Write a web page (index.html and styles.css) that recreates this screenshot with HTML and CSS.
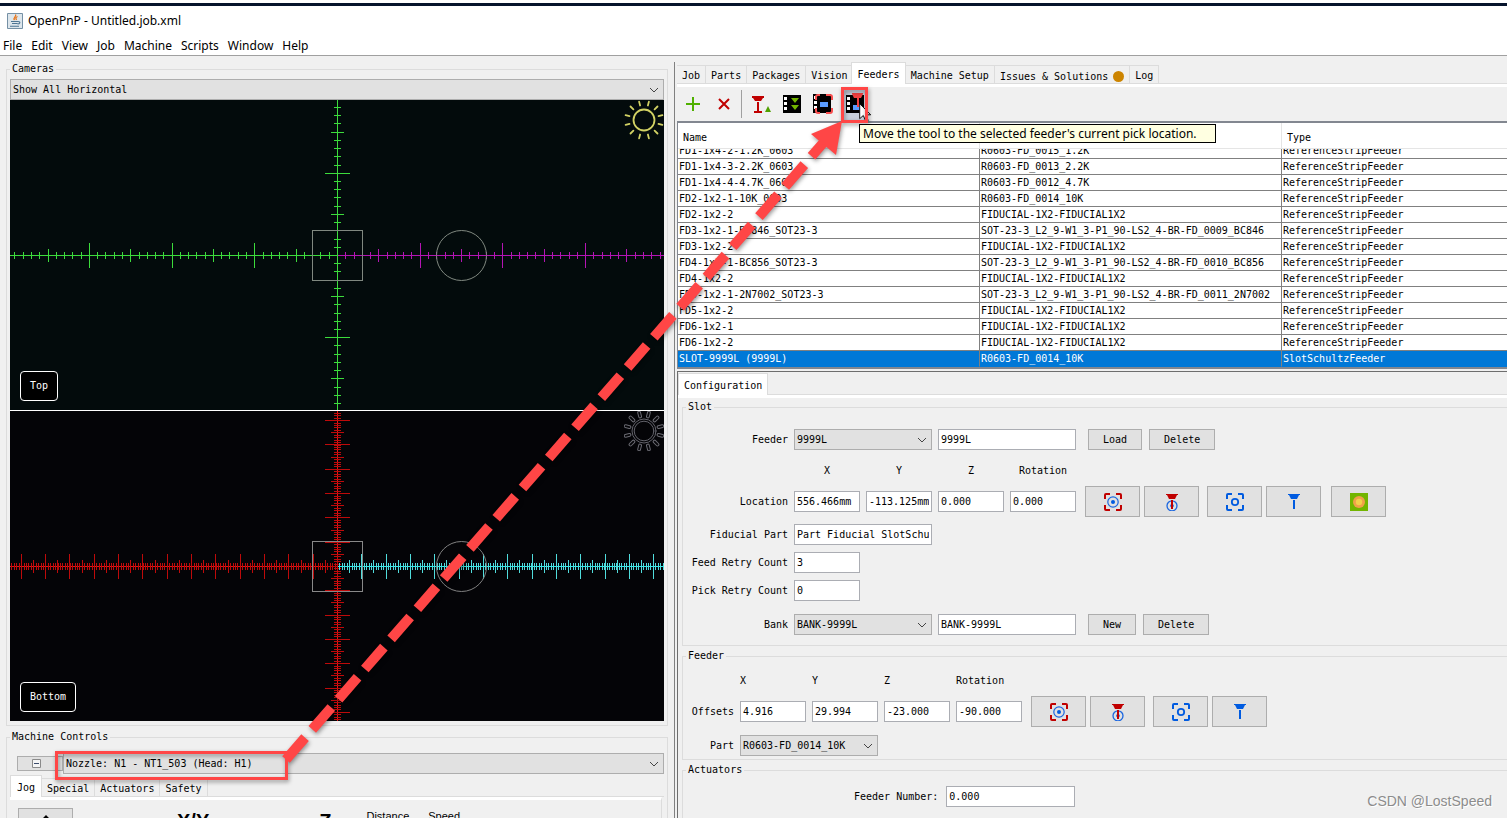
FILE: index.html
```html
<!DOCTYPE html>
<html lang="en">
<head>
<meta charset="utf-8">
<title>OpenPnP - Untitled.job.xml</title>
<link rel="stylesheet" href="styles.css">
</head>
<body>
<svg class="defs" width="0" height="0" aria-hidden="true">
  <defs>
    <symbol id="i-cam-red" viewBox="0 0 18 18">
      <path d="M1 6V2q0-1 1-1h4M12 1h4q1 0 1 1v4M17 12v4q0 1-1 1h-4M6 17H2q-1 0-1-1v-4" fill="none" stroke="#c00000" stroke-width="2"/>
      <circle cx="9" cy="9" r="5.2" fill="none" stroke="#1a66e0" stroke-width="1.2"/><circle cx="9" cy="9" r="2" fill="#005be0"/>
    </symbol>
    <symbol id="i-tool-red" viewBox="0 0 18 18">
      <circle cx="9" cy="12.8" r="5" fill="none" stroke="#1a66e0" stroke-width="1.3"/><circle cx="9" cy="12.8" r="1.8" fill="#005be0"/>
      <path d="M3 1h12v1h-1l-2 4H6L4 2H3zM8 7h2v9H8z" fill="#c00000"/>
    </symbol>
    <symbol id="i-cam-blue" viewBox="0 0 18 18">
      <path d="M1 6V2q0-1 1-1h4M12 1h4q1 0 1 1v4M17 12v4q0 1-1 1h-4M6 17H2q-1 0-1-1v-4" fill="none" stroke="#005be0" stroke-width="2"/>
      <circle cx="9" cy="9" r="3.2" fill="none" stroke="#005be0" stroke-width="1.8"/>
    </symbol>
    <symbol id="i-tool-blue" viewBox="0 0 18 18"><path d="M3 1h12v1h-1l-2 4H6L4 2H3zM8 7h2v9H8z" fill="#005be0"/></symbol>
    <symbol id="i-part" viewBox="0 0 18 18"><path d="M0 0h18v18H0z" fill="#72b500"/><circle cx="9" cy="9" r="6" fill="#f0a04a"/><circle cx="9" cy="9" r="3.2" fill="#f3d04c"/></symbol>
  </defs>
</svg>
<header class="titlebar">
  <svg width="16" height="16" viewBox="0 0 16 16"><path d="M.5.5h15v15H.5z" fill="#dde6ec" stroke="#7590a5"/><path d="M8.500 1.500c1.500 2-3 3-1 5.500M10.500 3.500c-2 1-2 1.500-1 3.500" fill="none" stroke="#e8751a" stroke-width="1.300"/><path d="M4 8.500h7M5 10.500h5.500M3 13.200h9M11 8.500c3 0 2 2.500-.5 2.500" fill="none" stroke="#4d7593" stroke-width="1.100"/></svg>
  <span>OpenPnP - Untitled.job.xml</span>
</header>
<nav class="menubar">
  <button>File</button><button>Edit</button><button>View</button><button>Job</button><button>Machine</button><button>Scripts</button><button>Window</button><button>Help</button>
</nav>
<main class="split">
  <section class="left">
    <fieldset class="group cameras">
      <legend>Cameras</legend>
      <select class="combo" aria-label="Camera view"><option>Show All Horizontal</option></select>
      <div class="view top">
        <svg class="reticle" viewBox="0 0 654 310" preserveAspectRatio="xMidYMid slice" fill="none" shape-rendering="crispEdges">
          <g stroke="#3cdc3c">
            <path d="M0 155.500H327M327.500 0V310"/>
            <path d="M327.500 155.500H0" stroke-width="7" stroke-dasharray="1 7.270" stroke-dashoffset=".5"/>
            <path d="M327.500 155.500H0" stroke-width="13" stroke-dasharray="1 40.340" stroke-dashoffset=".5"/>
            <path d="M327.500 155.500H0" stroke-width="25" stroke-dasharray="1 81.680" stroke-dashoffset=".5"/>
            <path d="M327.500 155.500V0M327.500 155.500V310" stroke-width="7" stroke-dasharray="1 7.220" stroke-dashoffset=".5"/>
            <path d="M327.500 155.500V0M327.500 155.500V310" stroke-width="13" stroke-dasharray="1 40.100" stroke-dashoffset=".5"/>
            <path d="M327.500 155.500V0M327.500 155.500V310" stroke-width="25" stroke-dasharray="1 81.200" stroke-dashoffset=".5"/>
          </g>
          <g stroke="#b414b4">
            <path d="M328 155.500H654"/>
            <path d="M327.500 155.500H654" stroke-width="7" stroke-dasharray="1 7.270" stroke-dashoffset="-7.770"/>
            <path d="M327.500 155.500H654" stroke-width="13" stroke-dasharray="1 40.340" stroke-dashoffset="-40.840"/>
            <path d="M327.500 155.500H654" stroke-width="25" stroke-dasharray="1 81.680" stroke-dashoffset="-82.180"/>
          </g>
          <path d="M302.500 130.500h50v50h-50z" stroke="#808880"/>
          <circle cx="451.500" cy="155.500" r="25" stroke="#808880" shape-rendering="auto"/>
        </svg>
        <svg class="sun" viewBox="0 0 40 40" fill="none" stroke="#d2d264" stroke-linecap="round"><circle cx="20" cy="20" r="10.500" stroke-width="1.800"/>
          <g stroke-width="1.800"><path id="rays" d="M34.500 16.100l3.900-1M34.500 23.900l3.900 1M30.600 9.400l2.900-2.900M30.600 30.600l2.900 2.900M23.900 5.500l1-3.900M23.900 34.500l1 3.900M16.100 5.500l-1-3.900M16.100 34.500l-1 3.900M9.400 9.400L6.500 6.500M9.400 30.600l-2.900 2.900M5.500 16.100l-3.900-1M5.500 23.900l-3.900 1"/></g></svg>
        <span class="tag">Top</span>
      </div>
      <div class="view bottom">
        <svg class="reticle" viewBox="0 0 654 310" preserveAspectRatio="xMidYMid slice" fill="none" shape-rendering="crispEdges">
          <g stroke="#be0a0a">
            <path d="M0 155.500H327M327.500 0V310" stroke="#e61414"/>
            <path d="M327.500 155.500H0M327.500 155.500V0M327.500 155.500V310" stroke-width="7" stroke-dasharray="1 1.430" stroke-dashoffset=".5"/>
            <path d="M327.500 155.500H0M327.500 155.500V0M327.500 155.500V310" stroke-width="13" stroke-dasharray="1 11.160" stroke-dashoffset=".5"/>
            <path d="M327.500 155.500H0M327.500 155.500V0M327.500 155.500V310" stroke-width="25" stroke-dasharray="1 23.320" stroke-dashoffset=".5"/>
          </g>
          <g stroke="#50dcdc">
            <path d="M328 155.500H654" stroke="#28f0f0"/>
            <path d="M327.500 155.500H654" stroke-width="7" stroke-dasharray="1 1.430" stroke-dashoffset="-1.930"/>
            <path d="M327.500 155.500H654" stroke-width="13" stroke-dasharray="1 11.160" stroke-dashoffset="-11.660"/>
            <path d="M327.500 155.500H654" stroke-width="25" stroke-dasharray="1 23.320" stroke-dashoffset="-23.820"/>
          </g>
          <path d="M302.500 130.500h50v50h-50z" stroke="#888"/>
          <circle cx="451.500" cy="155.500" r="25" stroke="#808080" shape-rendering="auto"/>
        </svg>
        <svg class="sun" viewBox="0 0 40 40" fill="none" stroke-linecap="round"><circle cx="20" cy="20" r="9.800" stroke="#62626a"/><circle cx="20" cy="20" r="12" stroke="#62626a"/><use href="#rays" stroke="#6a6a72" stroke-width="3.800"/><use href="#rays" stroke="#050508" stroke-width="1.800"/></svg>
        <span class="tag">Bottom</span>
      </div>
    </fieldset>
    <fieldset class="group controls">
      <legend>Machine Controls</legend>
      <div class="nozzle">
        <button class="btn collapse" aria-label="Collapse"><svg width="9" height="9" viewBox="0 0 9 9"><path d="M.5.5h8v8h-8z" fill="#f4f4f4" stroke="#8a8a8a"/><path d="M2 4.500h5" stroke="#3c4c6c"/></svg></button>
        <select class="combo" aria-label="Selected tool"><option>Nozzle: N1 - NT1_503 (Head: H1)</option></select>
      </div>
      <div class="tabs jogtabs" role="tablist">
        <button class="tab on" role="tab">Jog</button><button class="tab" role="tab">Special</button><button class="tab" role="tab">Actuators</button><button class="tab" role="tab">Safety</button>
      </div>
      <div class="jog">
        <button class="btn home" aria-label="Home"><svg width="16" height="16" viewBox="0 0 16 16"><path d="M8 0l8 8h-3v8H3V8H0z"/></svg></button>
        <b>X/Y</b><b>Z</b><span>Distance</span><span>Speed</span>
      </div>
    </fieldset>
  </section>
  <section class="right">
    <div class="tabs" role="tablist">
      <button class="tab" role="tab">Job</button><button class="tab" role="tab">Parts</button><button class="tab" role="tab">Packages</button><button class="tab" role="tab">Vision</button><button class="tab on" role="tab">Feeders</button><button class="tab" role="tab">Machine Setup</button><button class="tab issues" role="tab">Issues &amp; Solutions<i></i></button><button class="tab" role="tab">Log</button>
    </div>
    <div class="toolbar">
      <button aria-label="New feeder"><svg viewBox="0 0 24 24"><path d="M12 5v14M5 12h14" stroke="#50b000" stroke-width="2"/></svg></button>
      <button aria-label="Delete feeder"><svg viewBox="0 0 24 24"><path d="M7 7l10 10M17 7L7 17" stroke="#c00000" stroke-width="2"/></svg></button>
      <hr>
      <button aria-label="Pick"><svg viewBox="0 0 24 24"><path d="M3 4h12v2h-1l-2 3H6L4 6H3zM8 10h2v9H8zM5 19h8v2H5z" fill="#c00000"/><path d="M19 14l3 6h-6z" fill="#50a000"/></svg></button>
      <button aria-label="Feed"><svg viewBox="0 0 24 24"><path d="M3 3h18v18H3z"/><path d="M4 5h3v3H4zM4 10h3v3H4zM4 15h3v3H4z" fill="#fff"/><path d="M11 6h8l-4 5zM11 13h8l-4 5z" fill="#72b500"/></svg></button>
      <button aria-label="Move camera"><svg viewBox="0 0 24 24"><path d="M2 2h18v19H2z"/><path d="M3 4h3v3H3zM3 9h3v3H3zM3 14h3v3H3z" fill="#fff"/><path d="M9 10h8v5H9z" fill="#5a9cff"/><path d="M5 8V5q0-2 2-2h2M15 3h4q2 0 2 2v3M21 16v3q0 2-2 2h-4M9 21H7q-2 0-2-2v-3" fill="none" stroke="#f85050" stroke-width="2"/></svg></button>
      <button class="pressed" aria-label="Move tool"><svg viewBox="0 0 24 24"><path d="M3 3h18v18H3z"/><path d="M4 5h3v3H4zM4 10h3v3H4zM4 15h3v3H4z" fill="#fff"/><path d="M10 13h8v5h-8z" fill="#5a9cff"/><path d="M9 1h11v1l-2 4h-7L9 2zM14 6h2v9h-2z" fill="#f04040"/></svg>
        <svg class="cursor" viewBox="0 0 13 20"><path d="M.7.7v15l3.600-3.200 2.600 6 2.300-1-2.500-5.700h5z" fill="#fff" stroke="#111"/></svg></button>
      <div class="tip" role="tooltip">Move the tool to the selected feeder's current pick location.</div>
    </div>
    <div class="tablebox">
      <table>
        <colgroup><col class="c1"><col class="c2"><col></colgroup>
        <thead><tr><th>Name</th><th></th><th>Type</th></tr></thead>
        <tbody>
          <tr class="cut"><td><div>FD1-1x4-2-1.2K_0603</div></td><td><div>R0603-FD_0015_1.2K</div></td><td><div>ReferenceStripFeeder</div></td></tr>
          <tr><td>FD1-1x4-3-2.2K_0603</td><td>R0603-FD_0013_2.2K</td><td>ReferenceStripFeeder</td></tr>
          <tr><td>FD1-1x4-4-4.7K_0603</td><td>R0603-FD_0012_4.7K</td><td>ReferenceStripFeeder</td></tr>
          <tr><td>FD2-1x2-1-10K_0603</td><td>R0603-FD_0014_10K</td><td>ReferenceStripFeeder</td></tr>
          <tr><td>FD2-1x2-2</td><td>FIDUCIAL-1X2-FIDUCIAL1X2</td><td>ReferenceStripFeeder</td></tr>
          <tr><td>FD3-1x2-1-BC846_SOT23-3</td><td>SOT-23-3_L2_9-W1_3-P1_90-LS2_4-BR-FD_0009_BC846</td><td>ReferenceStripFeeder</td></tr>
          <tr><td>FD3-1x2-2</td><td>FIDUCIAL-1X2-FIDUCIAL1X2</td><td>ReferenceStripFeeder</td></tr>
          <tr><td>FD4-1x2-1-BC856_SOT23-3</td><td>SOT-23-3_L2_9-W1_3-P1_90-LS2_4-BR-FD_0010_BC856</td><td>ReferenceStripFeeder</td></tr>
          <tr><td>FD4-1x2-2</td><td>FIDUCIAL-1X2-FIDUCIAL1X2</td><td>ReferenceStripFeeder</td></tr>
          <tr><td>FD5-1x2-1-2N7002_SOT23-3</td><td>SOT-23-3_L2_9-W1_3-P1_90-LS2_4-BR-FD_0011_2N7002</td><td>ReferenceStripFeeder</td></tr>
          <tr><td>FD5-1x2-2</td><td>FIDUCIAL-1X2-FIDUCIAL1X2</td><td>ReferenceStripFeeder</td></tr>
          <tr><td>FD6-1x2-1</td><td>FIDUCIAL-1X2-FIDUCIAL1X2</td><td>ReferenceStripFeeder</td></tr>
          <tr><td>FD6-1x2-2</td><td>FIDUCIAL-1X2-FIDUCIAL1X2</td><td>ReferenceStripFeeder</td></tr>
          <tr class="sel"><td>SLOT-9999L (9999L)</td><td>R0603-FD_0014_10K</td><td>SlotSchultzFeeder</td></tr>
        </tbody>
      </table>
    </div>
    <div class="config">
      <div class="tabs" role="tablist"><button class="tab on" role="tab">Configuration</button></div>
      <fieldset class="group slot">
        <legend>Slot</legend>
        <div class="form">
          <label for="feeder">Feeder</label>
          <select id="feeder" class="combo w2"><option>9999L</option></select>
          <input class="w2" aria-label="Feeder name" value="9999L">
          <div class="acts text"><button class="btn">Load</button><button class="btn">Delete</button></div>
          <div class="heads"><span>X</span><span>Y</span><span>Z</span><span>Rotation</span></div>
          <label for="lx">Location</label>
          <input id="lx" value="556.466mm"><input aria-label="Y" value="-113.125mm"><input aria-label="Z" value="0.000"><input aria-label="Rotation" value="0.000">
          <div class="acts icons">
            <button class="btn" aria-label="Capture camera position"><svg><use href="#i-cam-red"/></svg></button><button class="btn" aria-label="Capture tool position"><svg><use href="#i-tool-red"/></svg></button>
            <button class="btn next" aria-label="Move camera here"><svg><use href="#i-cam-blue"/></svg></button><button class="btn" aria-label="Move tool here"><svg><use href="#i-tool-blue"/></svg></button>
            <button class="btn far" aria-label="Locate fiducial"><svg><use href="#i-part"/></svg></button>
          </div>
          <label class="row" for="fid">Fiducial Part</label><input id="fid" class="w2 row" value="Part_Fiducial_SlotSchu">
          <label class="row" for="frc">Feed Retry Count</label><input id="frc" class="row" value="3">
          <label class="row" for="prc">Pick Retry Count</label><input id="prc" class="row" value="0">
          <label class="bank" for="bank">Bank</label>
          <select id="bank" class="combo w2 bank"><option>BANK-9999L</option></select>
          <input class="w2 bank" aria-label="Bank name" value="BANK-9999L">
          <div class="acts text bank"><button class="btn">New</button><button class="btn">Delete</button></div>
        </div>
      </fieldset>
      <fieldset class="group feeder">
        <legend>Feeder</legend>
        <div class="form">
          <div class="heads"><span>X</span><span>Y</span><span>Z</span><span>Rotation</span></div>
          <label for="ox">Offsets</label>
          <input id="ox" value="4.916"><input aria-label="Y" value="29.994"><input aria-label="Z" value="-23.000"><input aria-label="Rotation" value="-90.000">
          <div class="acts icons">
            <button class="btn" aria-label="Capture camera position"><svg><use href="#i-cam-red"/></svg></button><button class="btn" aria-label="Capture tool position"><svg><use href="#i-tool-red"/></svg></button>
            <button class="btn next" aria-label="Move camera here"><svg><use href="#i-cam-blue"/></svg></button><button class="btn" aria-label="Move tool here"><svg><use href="#i-tool-blue"/></svg></button>
          </div>
          <label class="row" for="part">Part</label><select id="part" class="combo w2 row"><option>R0603-FD_0014_10K</option></select>
        </div>
      </fieldset>
      <fieldset class="group actuators">
        <legend>Actuators</legend>
        <div class="actrow"><label for="num">Feeder Number:</label><input id="num" value="0.000"></div>
      </fieldset>
    </div>
  </section>
</main>
<svg class="marks" width="900" height="800" viewBox="0 0 900 800" fill="none" stroke="#ff4646" aria-hidden="true">
  <path d="M842.500 88.500h24v33h-24zM56.500 752.500h230v26h-230z" stroke-width="3"/>
  <path d="M286 759.500L824 142" stroke-width="10" stroke-dasharray="29 11"/>
  <path d="M842 121l-31 13 25 21z" fill="#ff4646" stroke="none"/>
</svg>
<div class="watermark">CSDN @LostSpeed</div>
</body>
</html>
```
FILE: styles.css
```css
* { box-sizing: border-box; }
html { background: #fff; }
body {
  display: flex;
  flex-direction: column;
  margin: 0;
  height: 100vh;
  overflow: hidden;
  position: relative;
  color: #000;
  font: 10px/12px "DejaVu Sans Mono", monospace;
}
button, input, select { font: inherit; color: inherit; margin: 0; border-radius: 0; }
.defs { position: absolute; }

.titlebar {
  display: flex;
  align-items: center;
  gap: 5px;
  flex: none;
  height: 33px;
  padding: 0 7px;
  margin-top: 3px;
  border-top: 3px solid #06142c;
  background: #fff;
  font: 12px/16px "Noto Sans", sans-serif;
}
.menubar {
  display: flex;
  flex: none;
  gap: 9px;
  height: 20px;
  padding: 1px 3px 0;
  background: #fff;
  border-bottom: 1px solid #a0a0a0;
}
.menubar button { border: 0; padding: 0; background: none; font: 12px/16px "Noto Sans", sans-serif; }

.split { display: grid; grid-template-columns: 674fr 833fr; flex: 1; min-height: 0; overflow: hidden; background: #f0f0f0; }
.left { min-width: 0; padding: 7px 6px 0; }
.right { min-width: 0; border-left: 1px solid #808080; padding-left: 2px; margin-top: 6px; }

.group { min-width: 0; margin: 0; border: 1px solid #dcdcdc; padding: 4px 3px; }
.group legend { padding: 0 2px; }

.combo {
  display: block;
  appearance: none;
  height: 21px;
  padding: 0 2px;
  border: 1px solid #adadad;
  background: #e1e1e1 url("data:image/svg+xml,%3Csvg xmlns='http://www.w3.org/2000/svg' width='10' height='6'%3E%3Cpath d='M1 1l4 4 4-4' fill='none' stroke='%23444'/%3E%3C/svg%3E") no-repeat right 4px center;
}
.cameras .combo { width: 100%; }
input { height: 21px; min-width: 0; border: 1px solid #abadb3; padding: 0 2px; background: #fff; }
.btn { border: 1px solid #adadad; background: #e1e1e1; padding: 0; }

.view { position: relative; height: 310px; background: #030b0c; overflow: hidden; }
.view.bottom { height: 311px; border-top: 1px solid #fff; background: #040407; }
.reticle { display: block; width: 100%; height: 310px; }
.sun { position: absolute; top: 0; right: 0; width: 40px; height: 40px; }
.tag {
  position: absolute;
  left: 10px;
  bottom: 9px;
  padding: 8px 9px;
  border: 1px solid #fff;
  border-radius: 4px;
  background: #000;
  color: #fff;
}

.controls { margin-top: 5px; padding-top: 10px; }
.nozzle { display: flex; align-items: center; padding-left: 7px; }
.nozzle .combo { flex: 1; }
.collapse { width: 46px; height: 15px; padding-right: 8px; display: flex; align-items: center; justify-content: center; }

.tabs { display: flex; align-items: flex-end; height: 22px; border-bottom: 1px solid #dcdcdc; }
.tab { height: 18px; border: 1px solid #dcdcdc; border-width: 1px 1px 0 0; background: #f0f0f0; padding: 2px 5px 0; }
.tab.on { height: 22px; background: #fff; margin-bottom: -1px; border-left-width: 1px; }
.right > .tabs .on { margin-left: -2px; }
.issues { display: flex; align-items: center; gap: 5px; padding-top: 4px; }
.issues i { width: 11px; height: 11px; border-radius: 50%; background: #cc8400; }

.jogtabs { margin-top: 1px; }
.jogtabs .on { padding: 2px 6px 0; }
.jog {
  display: flex;
  align-items: flex-start;
  margin-right: 2px;
  padding: 8px;
  border-top: 3px solid #fff;
  border-right: 1px solid #dcdcdc;
  font: 11px/12px "Liberation Sans", sans-serif;
}
.home { width: 55px; height: 31px; padding: 4px; }
.jog b { font-size: 20px; line-height: 24px; margin: 1px 0 0 104px; }
.jog b + b { margin-left: 110px; }
.jog span { margin: 2px 0 0 35px; }
.jog span + span { margin-left: 19px; }

.toolbar {
  position: relative;
  display: flex;
  align-items: center;
  height: 37px;
  border-top: 3px solid #fff;
}
.toolbar button { position: relative; width: 31px; height: 32px; padding: 0; border: 0; background: none; display: flex; align-items: center; justify-content: center; }
.toolbar button svg { width: 24px; height: 24px; }
.toolbar hr { width: 1px; height: 28px; margin: 0 3px 0 2px; border: 0; background: #a0a0a0; }
.toolbar .pressed { background: #c8d0dc; width: 27px; margin-left: 3px; }
.toolbar .pressed .cursor { position: absolute; left: 18px; top: 15px; width: 13px; height: 20px; }
.tip {
  position: absolute;
  left: 182px;
  top: 37px;
  z-index: 3;
  min-width: 357px;
  padding: 0 3px;
  border: 1px solid #000;
  background: #ffffe1;
  font: 12px/17px "Noto Sans", sans-serif;
  white-space: nowrap;
}

.tablebox { border: 2px solid #828790; border-width: 2px 0 2px 1px; background: #fff; overflow: hidden; }
table { width: 100%; table-layout: fixed; border-collapse: separate; border-spacing: 0; }
.c1, .c2 { width: 302px; }
th { height: 26px; padding: 4px 5px 0; text-align: left; font-weight: normal; border-right: 1px solid #e5e5e5; border-bottom: 1px solid #e5e5e5; }
td { height: 16px; padding: 0 1px; border-right: 1px solid #808080; border-bottom: 1px solid #808080; white-space: nowrap; overflow: hidden; line-height: 15px; }
th:last-child, td:last-child { border-right: 0; }
.cut td { height: 10px; }
.cut div { height: 9px; display: flex; align-items: flex-end; overflow: hidden; }
.sel td { background: #0078d7; color: #fff; border-bottom-color: #0078d7; }

.config { margin-top: 2px; border-top: 1px solid #6e6e6e; border-left: 1px solid #6e6e6e; }
.config > .tabs { height: 23px; box-shadow: 0 3px #fff; margin-bottom: 6px; }
.config .group { margin-left: 4px; border-right: 0; }
.config legend { margin-left: 3px; }
.slot { padding: 16px 0 10px; }
.form { display: grid; grid-template-columns: 105px repeat(4, 66px) 1fr; column-gap: 6px; align-items: center; }
.form label { grid-column: 1; text-align: right; white-space: nowrap; }
.w2 { grid-column: span 2; width: 100%; }
.heads { grid-column: 2 / span 4; display: grid; grid-template-columns: repeat(4, 66px); gap: 6px; text-align: center; padding: 15px 0 9px; }
.acts { display: flex; align-items: center; }
.text { gap: 7px; padding-left: 6px; }
.text .btn { height: 21px; padding: 0 14px; }
.icons { gap: 4px; padding-left: 3px; }
.icons .btn { flex: none; width: 55px; height: 31px; display: flex; align-items: center; justify-content: center; }
.icons svg { width: 18px; height: 18px; }
.icons .next { margin-left: 4px; }
.icons .far { margin-left: 6px; }
.form .row { margin-top: 7px; }
.form .bank { margin-top: 13px; }

.feeder { margin-top: 4px; padding: 13px 0 3px; }
.feeder .form { grid-template-columns: 51px repeat(4, 66px) 1fr; }
.feeder .heads { text-align: left; padding: 0 0 9px; }
.feeder .row { margin-top: 8px; }
.actuators { margin-top: 4px; padding: 10px 0 20px; }
.actrow { display: flex; align-items: center; gap: 8px; padding-left: 171px; }
.actrow input { width: 129px; }

.marks { position: absolute; left: 0; top: 0; z-index: 2; pointer-events: none; filter: drop-shadow(1px 2px 2px rgba(0, 0, 0, .4)); }
.watermark { position: absolute; right: 15px; bottom: 8px; color: #8c8c8c; font: 14px/18px "Liberation Sans", sans-serif; text-shadow: 1px 1px #fff; }
```
